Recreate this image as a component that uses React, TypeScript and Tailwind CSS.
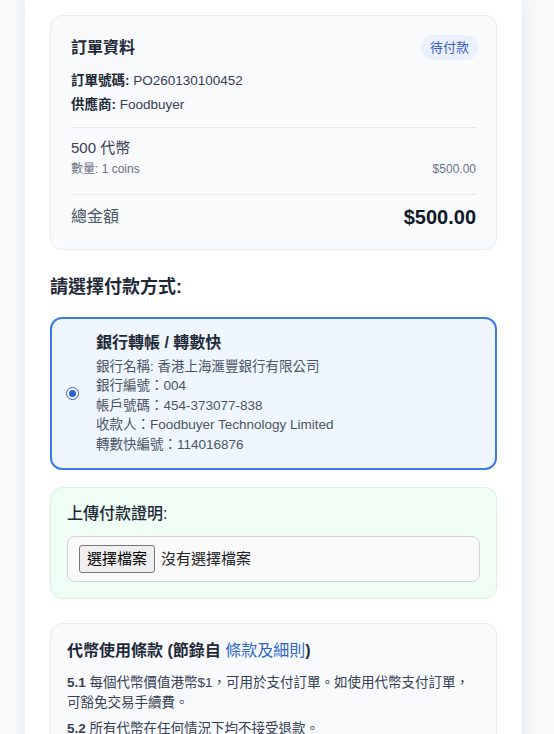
import React from "react";

const font = { fontFamily: '"Liberation Sans", "Noto Sans CJK TC", sans-serif' };

export default function App() {
  return (
    <div className="min-h-screen bg-[#f7f8fa]" style={font}>
      <div className="ml-[25px] w-[497px] bg-white shadow-[0_0_12px_rgba(0,0,0,0.08)] px-[25px] pt-[15px] pb-10">
        {/* Order info */}
        <div className="rounded-xl border border-[#e8ebf0] bg-[#f8fafc] px-5 pt-[19px] pb-[18px]">
          <div className="flex h-[25px] items-center justify-between">
            <div className="text-[16px] font-bold leading-5 text-[#1f2937]">訂單資料</div>
            <div className="mr-[-2px] flex h-[25px] items-center rounded-full bg-[#eaf1fd] px-[9px] text-[13px] text-[#3b5cc4]">待付款</div>
          </div>
          <div className="mt-[11px] flex flex-col gap-1 text-[13.5px] leading-5 text-[#374151]">
            <div><span className="font-bold text-[#1f2937]">訂單號碼:</span> PO260130100452</div>
            <div><span className="font-bold text-[#1f2937]">供應商:</span> Foodbuyer</div>
          </div>
          <div className="mt-3 border-t border-[#e5e7eb] pt-[10px] pb-[17px]">
            <div className="text-[15px] leading-5 text-[#374151]">500 代幣</div>
            <div className="mt-[3px] flex justify-between text-[12px] leading-4 text-[#6b7280]">
              <span>數量: 1 coins</span>
              <span>$500.00</span>
            </div>
          </div>
          <div className="flex items-center justify-between border-t border-[#e5e7eb] pt-2">
            <span className="text-[16px] leading-7 text-[#4b5563]">總金額</span>
            <span className="text-[20px] font-bold leading-7 text-[#111827]">$500.00</span>
          </div>
        </div>

        {/* Payment method heading */}
        <div className="mt-[23px] text-[18px] font-bold leading-7 text-[#1f2937]">請選擇付款方式:</div>

        <div className="mt-4 flex items-center gap-4 rounded-xl border-2 border-[#3b7be6] bg-[#eff6ff] p-[14px]">
          <div className="flex h-[13px] w-[13px] shrink-0 items-center justify-center rounded-full border-[1.5px] border-[#2a5fd8] bg-white">
            <div className="h-[7px] w-[7px] rounded-full bg-[#2a5fd8]" />
          </div>
          <div className="pl-[1px]">
            <div className="text-[16px] font-bold leading-5 text-[#1f2937]">銀行轉帳 / 轉數快</div>
            <div className="mt-[4px] text-[13.5px] leading-[19.4px] text-[#4b5563]">
              <div>銀行名稱: 香港上海滙豐銀行有限公司</div>
              <div>銀行編號：004</div>
              <div>帳戶號碼：454-373077-838</div>
              <div>收款人：Foodbuyer Technology Limited</div>
              <div>轉數快編號：114016876</div>
            </div>
          </div>
        </div>

        {/* Upload */}
        <div className="mt-[17px] rounded-xl border border-[#d6f5e0] bg-[#f0fdf4] p-4">
          <div className="text-[16px] font-medium leading-5 text-[#1f2937]">上傳付款證明:</div>
          <div className="mt-3 flex items-center gap-[6px] rounded-lg border border-[#d1d5db] bg-[#fafafa] py-[8px] pl-[11px]">
            <span className="flex h-[28px] items-center rounded-[3px] border border-[#767676] bg-[#efefef] px-[7px] text-[15px] text-black">選擇檔案</span>
            <span className="text-[15px] text-[#222]">沒有選擇檔案</span>
          </div>
        </div>

        {/* Terms */}
        <div className="mt-6 rounded-xl border border-[#e8ebf0] bg-[#f8fafc] p-4">
          <div className="text-[16px] font-bold leading-[22px] text-[#1f2937]">
            代幣使用條款 (節錄自 <span className="font-normal text-[#2f66c8]">條款及細則</span>)
          </div>
          <div className="mt-[11px] flex flex-col gap-[6px] text-[13.5px] leading-5 text-[#374151]">
            <p>
              <span className="whitespace-nowrap">
                <span className="font-bold">5.1</span> 每個代幣價值港幣$1，可用於支付訂單。如使用代幣支付訂單，
              </span>
              <br />
              可豁免交易手續費。
            </p>
            <p>
              <span className="font-bold">5.2</span> 所有代幣在任何情況下均不接受退款。
            </p>
            <p>
              <span className="font-bold">5.3</span> 代幣不可轉讓，亦不可兌換現金。
            </p>
          </div>
        </div>
      </div>
    </div>
  );
}
